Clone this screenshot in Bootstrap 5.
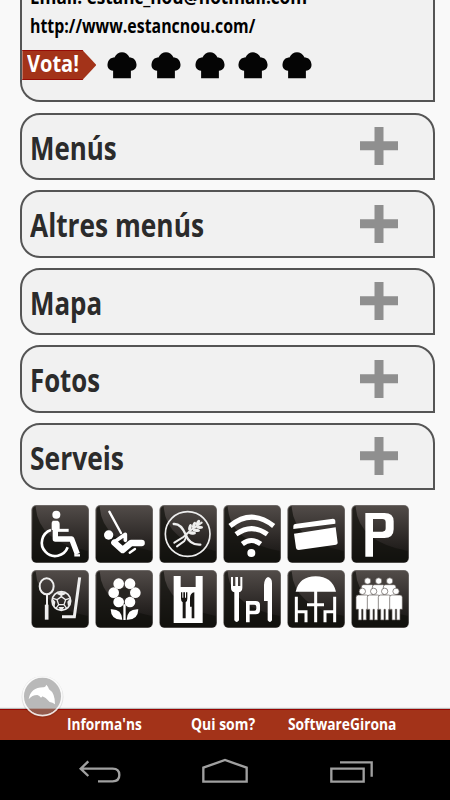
<!DOCTYPE html>
<html lang="ca">
<head>
<meta charset="utf-8">
<meta name="viewport" content="width=device-width, initial-scale=1">
<title>Estanc Nou</title>
<link href="https://cdn.jsdelivr.net/npm/bootstrap@5.3.0/dist/css/bootstrap.min.css" rel="stylesheet">
<style>
body{font-family:"Open Sans","Noto Sans",sans-serif;background:#f9f9f9;height:800px;width:450px;color:#000}
.page{height:709px}
.panel{border:2px solid #555;background:#f1f1f1;border-radius:20px 20px 0 20px;margin:0 15px 0 20.4px}
.panel-top{border-top:0;border-radius:0 0 0 20px;height:102px;display:flow-root}
.cond{display:inline-block;white-space:nowrap;transform-origin:0 50%;transform:scaleX(var(--sx,.8))}
.line{height:29px;line-height:29px;font-size:20px;font-weight:700;padding-left:8px}
.line:first-child{margin-top:-18px}
.vote{height:30px;margin-top:10px}
.ribbon{width:74px;background:#a33319;border-top:1px solid #960c05;border-bottom:1px solid #960c05;clip-path:polygon(0 0,60px 0,74px 50%,60px 100%,0 100%);color:#fff;font-size:22.5px;font-weight:700;line-height:26px;padding-left:5px}
.hats{margin-left:11px;gap:13.7px}
.item{height:67.5px;margin-top:10px;padding:0 35px 0 7.5px;font-size:33px;font-weight:700;color:#2b2b2b;line-height:1}
.item .cond{padding-top:2px}
.first{margin-top:10.5px}
.services{display:grid;grid-template-columns:repeat(6,58px);gap:7px 6px;margin:15px 0 0 31px}
.services svg{width:58px;height:58px;display:block}
.foot{height:31px;background:#a33319;border-top:1px solid #960400;box-shadow:0 -1px 1px #bbb;color:#fff;font-size:16.5px;font-weight:700;line-height:28px}
.foot a{color:#fff;text-decoration:none}
.sys{height:60px;background:#000}
.bubble{left:20px;top:674px}
.t-mail{--sx:.858}.t-url{--sx:.795}.t-vota{--sx:.89}
.t-menus{--sx:.785}.t-altres{--sx:.797}.t-mapa{--sx:.785}.t-fotos{--sx:.78}.t-serveis{--sx:.8}
.t-inf{--sx:.83}.t-qui{--sx:.845}.t-soft{--sx:.835}
.foot .w1{margin-left:67px;width:124px}.foot .w2{width:96.500px}
</style>
<script src="https://cdn.jsdelivr.net/npm/bootstrap@5.3.0/dist/js/bootstrap.bundle.min.js"></script>
</head>
<body class="d-flex flex-column overflow-hidden position-relative">
<svg width="0" height="0" class="position-absolute">
<defs>
<linearGradient id="tg" x1="0" y1="0" x2="0" y2="1"><stop offset="0" stop-color="#524c49"/><stop offset=".6" stop-color="#2b2725"/><stop offset="1" stop-color="#12110f"/></linearGradient>
<clipPath id="disc"><circle cx="127.500" cy="94" r="56"/></clipPath>
<symbol id="tile" viewBox="0 0 174 174"><rect x="1" y="0" width="173" height="174" rx="15" fill="#8a8785"/><rect x="2.500" y="1.500" width="170" height="171" rx="14" fill="url(#tg)"/><path d="M14 4Q20 110 170 138V160Q170 170 158 170H16Q5 170 5 158V16Q5 6 14 4Z" fill="#11110d" opacity=".7"/></symbol>
<symbol id="hat" viewBox="0 0 90 82"><path d="M18 80V57C5 55 0 46 1 37C3 23 12 17 22 17C27 6 36 1 45 1C54 1 63 6 68 17C78 17 87 23 89 37C90 46 85 55 72 57V80Z" fill="#050505"/></symbol>
<symbol id="plus" viewBox="0 0 38 38"><path d="M14.5 0h9v14.3H38v9H23.5V38h-9V23.3H0v-9h14.5z" fill="#8f8f8f"/></symbol>
<g id="man"><circle cx="0" cy="0" r="9.500"/><path d="M-19 18Q-19 11 -12 11H12Q19 11 19 18V54H12V86H2V54H-2V86H-12V54H-19Z"/></g>
</defs>
</svg>
<main class="page overflow-hidden flex-shrink-0">
<section class="panel panel-top">
<div class="line"><span class="cond t-mail">Email: estanc_nou@hotmail.com</span></div>
<div class="line"><span class="cond t-url">http://www.estancnou.com/</span></div>
<div class="vote d-flex align-items-stretch">
<div class="ribbon"><span class="cond t-vota">Vota!</span></div>
<div class="hats d-flex align-items-center">
<svg width="30" height="27"><use href="#hat"/></svg><svg width="30" height="27"><use href="#hat"/></svg><svg width="30" height="27"><use href="#hat"/></svg><svg width="30" height="27"><use href="#hat"/></svg><svg width="30" height="27"><use href="#hat"/></svg>
</div>
</div>
</section>
<section class="panel item first d-flex align-items-center justify-content-between"><span class="cond t-menus">Menús</span><svg width="38" height="38"><use href="#plus"/></svg></section>
<section class="panel item d-flex align-items-center justify-content-between"><span class="cond t-altres">Altres menús</span><svg width="38" height="38"><use href="#plus"/></svg></section>
<section class="panel item d-flex align-items-center justify-content-between"><span class="cond t-mapa">Mapa</span><svg width="38" height="38"><use href="#plus"/></svg></section>
<section class="panel item d-flex align-items-center justify-content-between"><span class="cond t-fotos">Fotos</span><svg width="38" height="38"><use href="#plus"/></svg></section>
<section class="panel item d-flex align-items-center justify-content-between"><span class="cond t-serveis">Serveis</span><svg width="38" height="38"><use href="#plus"/></svg></section>
<div class="services">
<!-- wheelchair -->
<svg viewBox="18 15 174 174"><use href="#tile" x="18" y="15" width="174" height="174"/><g fill="none" stroke="#fff"><circle cx="94" cy="44" r="12" fill="#fff" stroke="none"/><path d="M91 68V117H140L157 162" stroke-width="16" stroke-linejoin="round"/><path d="M83 62H98Q104 64 104 72V90H80V68Z" fill="#fff" stroke="none"/><path d="M98 91H131" stroke-width="9"/><path d="M148 166H165" stroke-width="7"/><path d="M78 90A40 40 0 1 0 128 142" stroke-width="8"/></g></svg>
<!-- swing -->
<svg viewBox="210 15 174 174"><use href="#tile" x="210" y="15" width="174" height="174"/><g fill="none" stroke="#fff" stroke-linecap="round" stroke-linejoin="round"><circle cx="251" cy="105" r="14" fill="#fff" stroke="none"/><path d="M253 35L288 99" stroke-width="7"/><path d="M271 124L301 103M301 104V121" stroke-width="11"/><path d="M268 128L293 150L318 129H350" stroke-width="19"/><path d="M314 158L330 147" stroke-width="7"/></g></svg>
<!-- gluten free -->
<svg viewBox="12 15 174 174"><use href="#tile" x="12" y="15" width="174" height="174"/><g fill="none" stroke="#eee" stroke-linecap="round"><circle cx="98" cy="102" r="67" stroke-width="5"/><path d="M56 72Q78 70 92 104Q104 136 136 134" stroke-width="7"/><path d="M58 128L85 111Q91 106 108 90L140 68M66 139L88 123Q94 115 94 101" stroke-width="6"/></g><g fill="#eee"><ellipse cx="105" cy="82" rx="5" ry="10" transform="rotate(15 105 82)"/><ellipse cx="117" cy="75" rx="5" ry="10" transform="rotate(20 117 75)"/><ellipse cx="129" cy="68" rx="5" ry="9" transform="rotate(30 129 68)"/><ellipse cx="112" cy="99" rx="5" ry="11" transform="rotate(95 112 99)"/><ellipse cx="124" cy="91" rx="5" ry="11" transform="rotate(95 124 91)"/><ellipse cx="134" cy="82" rx="5" ry="10" transform="rotate(90 134 82)"/></g></svg>
<!-- wifi -->
<svg viewBox="204 15 174 174"><use href="#tile" x="204" y="15" width="174" height="174"/><g fill="none" stroke="#fff" stroke-width="15"><path d="M225 78Q290 25 356 78"/><path d="M243 103Q290 69 337 103"/><path d="M262 132Q289 111 317 132"/></g><circle cx="289" cy="159" r="12" fill="#fff"/></svg>
<!-- credit card -->
<svg viewBox="12 15 174 174"><use href="#tile" x="12" y="15" width="174" height="174"/><path fill="#fff" d="M36 72L150 56Q156 56 157 62V71L31 87V79Q31 73 36 72ZM33 101L158 82L164 128Q164 133 159 134L47 150Q40 150 39 144Z"/></svg>
<!-- parking -->
<svg viewBox="204 15 174 174"><use href="#tile" x="204" y="15" width="174" height="174"/><path fill="#fff" fill-rule="evenodd" d="M247 39H304Q332 39 332 64V88Q332 114 304 114H270V170H247ZM270 57V95H298Q308 95 308 85V67Q308 57 298 57Z"/></svg>
<!-- sports -->
<svg viewBox="18 15 174 174"><use href="#tile" x="18" y="15" width="174" height="174"/><g fill="none" stroke="#eee"><ellipse cx="65" cy="64" rx="21" ry="24" stroke-width="6"/><path d="M66 89V121" stroke-width="6"/><path d="M65 119V164" stroke-width="11"/><path d="M164 37L148 155H111" stroke-width="9"/><circle cx="109" cy="108" r="28" stroke-width="5"/><path d="M109 95L122 104L117 119H101L96 104ZM109 95V83M122 104L134 100M117 119L125 130M101 119L93 130M96 104L84 100" stroke-width="4"/></g><path fill="#eee" d="M94 86L109 80 124 86 109 93ZM83 101L91 110 89 124 82 115ZM135 101L127 110 129 124 136 115ZM100 126H118L112 135H106Z"/></svg>
<!-- flower -->
<svg viewBox="210 15 174 174"><use href="#tile" x="210" y="15" width="174" height="174"/><g fill="#fff"><circle cx="281" cy="56" r="16"/><circle cx="315" cy="56" r="16"/><circle cx="266" cy="83" r="16"/><circle cx="331" cy="83" r="16"/><circle cx="281" cy="111" r="16"/><circle cx="315" cy="111" r="16"/><path d="M295 118H302V165H295ZM257 133Q290 131 292 164Q258 166 257 133ZM340 133Q307 131 305 164Q339 166 340 133Z"/></g><circle cx="298" cy="84" r="16" fill="#282522"/></svg>
<!-- takeaway bag -->
<svg viewBox="12 15 174 174"><use href="#tile" x="12" y="15" width="174" height="174"/><path fill="#fff" d="M56 33H77V66H122V33H143V174H56Z"/><path fill="#181614" d="M78 82H82V98H85V82H90V98H93V82H97V101Q97 109 92 112V160H83V112Q78 109 78 101ZM118 160H110V125H105V98Q106 84 118 82Z"/></svg>
<!-- restaurant parking -->
<svg viewBox="204 15 174 174"><use href="#tile" x="204" y="15" width="174" height="174"/><path fill="#fff" fill-rule="evenodd" d="M228 36H234V63H241V36H249V63H256V36H262V68Q262 79 252 82V166Q245 176 238 166V82Q228 79 228 68ZM339 36Q351 38 351 55V166Q345 176 338 166V108H327V60Q328 40 339 36ZM273 108H302Q315 108 315 120V135Q315 148 302 148H284V172H273ZM284 119V137H298Q304 137 304 131V125Q304 119 298 119Z"/></svg>
<!-- terrace -->
<svg viewBox="12 15 174 174"><use href="#tile" x="12" y="15" width="174" height="174"/><path fill="#fff" d="M38 80Q49 34 98 34Q147 34 159 80Z"/><g fill="none" stroke="#fff" stroke-width="9"><path d="M98 78V172M72 119H123"/><path d="M40 95V172M40 140H69V172M155 95V172M155 140H126V172"/></g></svg>
<!-- groups -->
<svg viewBox="204 15 174 174"><use href="#tile" x="204" y="15" width="174" height="174"/><g fill="#fff" stroke="#5a5552" stroke-width="2"><use href="#man" x="254" y="48"/><use href="#man" x="287" y="48"/><use href="#man" x="320" y="48"/><use href="#man" x="238" y="79"/><use href="#man" x="272" y="79"/><use href="#man" x="305" y="79"/><use href="#man" x="339" y="79"/></g></svg>
</div>
</main>
<footer class="foot flex-shrink-0 d-flex"><a href="#" class="w1"><span class="cond t-inf">Informa'ns</span></a><a href="#" class="w2"><span class="cond t-qui">Qui som?</span></a><a href="#"><span class="cond t-soft">SoftwareGirona</span></a></footer>
<nav class="sys flex-shrink-0">
<svg width="450" height="60" viewBox="0 225 1350 180" fill="none" stroke="#a0a0a0" stroke-width="7"><path d="M265 289L242 311L265 333M243 311H338Q358 311 358 330Q358 349 338 349H294"/><path d="M610 350V308L675 285L740 308V350Z"/><path d="M994 311H1091V350H994ZM1020 292H1115V335"/></svg>
</nav>
<svg class="bubble position-absolute" width="45" height="45" viewBox="60 27 135 135"><circle cx="127.500" cy="96" r="63" fill="#000" opacity=".09"/><circle cx="127.500" cy="94" r="57" fill="#b9b9b9"/><rect x="60" y="131" width="135" height="30" fill="#935a4c" clip-path="url(#disc)"/><circle cx="127.500" cy="94" r="58" fill="none" stroke="#fff" stroke-opacity=".85" stroke-width="5"/><path fill="#fff" d="M86 103Q92 66 132 67Q137 66 139 59Q145 65 147 73Q165 84 165 118Q158 112 149 111Q140 98 127 94Q127 98 121 97Q120 92 112 90Q96 90 86 103Z"/></svg>
</body>
</html>
